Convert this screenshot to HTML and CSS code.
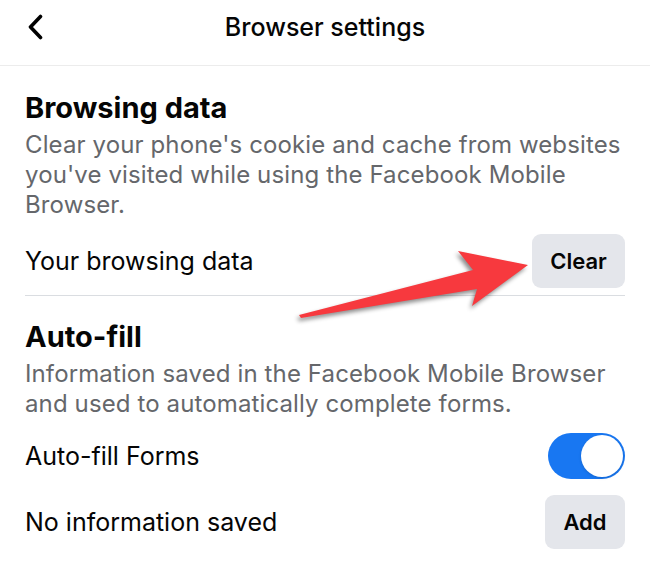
FILE: index.html
```html
<!DOCTYPE html>
<html lang="en">
<head>
<meta charset="utf-8">
<title>Browser settings</title>
<link rel="stylesheet" href="styles.css">
</head>
<body>
<div class="screen">
  <header class="topbar">
    <div class="back">
      <svg width="18" height="26" viewBox="0 0 18 26" aria-hidden="true">
        <polyline points="13.5,2.5 3.5,13 13.5,23.5" fill="none" stroke="#000" stroke-width="3.6" stroke-linecap="round" stroke-linejoin="round"/>
      </svg>
    </div>
    <h1 class="title">Browser settings</h1>
    <div class="spacer"></div>
  </header>

  <section class="section">
    <h2 class="heading">Browsing data</h2>
    <p class="desc">Clear your phone's cookie and cache from websites you've visited while using the Facebook Mobile Browser.</p>
    <div class="row">
      <span class="label">Your browsing data</span>
      <button class="btn btn-clear">Clear</button>
    </div>
  </section>

  <div class="divider"></div>

  <section class="section section-2">
    <h2 class="heading">Auto-fill</h2>
    <p class="desc">Information saved in the Facebook Mobile Browser and used to automatically complete forms.</p>
    <div class="row row-toggle">
      <span class="label">Auto-fill Forms</span>
      <span class="toggle"><span class="knob"></span></span>
    </div>
    <div class="row row-add">
      <span class="label">No information saved</span>
      <button class="btn btn-add">Add</button>
    </div>
  </section>

  <svg class="arrow" width="650" height="561" viewBox="0 0 650 561" aria-hidden="true">
    <polygon points="299,315 473,270 458,251 528,265 472,306 477,289 301,318" fill="#f7393e"/>
  </svg>
</div>
</body>
</html>
```

FILE: styles.css
```css
* { box-sizing: border-box; }
html, body {
  margin: 0;
  padding: 0;
  background: #fff;
}
body {
  font-family: "Inter", "Roboto", "Liberation Sans", sans-serif;
  color: #050505;
  width: 650px;
  height: 561px;
  overflow: hidden;
}
.screen {
  position: relative;
  width: 650px;
  height: 561px;
}
.topbar {
  display: grid;
  grid-template-columns: 1fr auto 1fr;
  align-items: center;
  height: 66px;
  padding-bottom: 11px;
  border-bottom: 1px solid #ececec;
}
.back {
  display: flex;
  padding-left: 27px;
}
.back svg { display: block; }
.title {
  margin: 0;
  font-size: 25px;
  font-weight: 500;
  line-height: 30px;
  color: #050505;
}
.section {
  padding: 25px 25px 0 25px;
}
.section-2 {
  padding-top: 24px;
}
.heading {
  margin: 0;
  font-size: 29px;
  line-height: 34px;
  font-weight: 700;
  color: #050505;
}
.desc {
  margin: 5px 0 0 0;
  font-size: 24px;
  line-height: 30px;
  color: #65676b;
  font-weight: 400;
  letter-spacing: 0.12px;
}
.row {
  display: flex;
  align-items: center;
  justify-content: space-between;
  height: 54px;
  margin-top: 14px;
}
.row-toggle { margin-top: 10px; }
.row-add { margin-top: 12px; }
.label {
  font-size: 25px;
  color: #050505;
}
.btn {
  border: none;
  background: #e4e6eb;
  border-radius: 9px;
  height: 54px;
  font-family: inherit;
  font-size: 22px;
  font-weight: 600;
  color: #050505;
  padding: 0;
}
.btn-clear { width: 93px; }
.btn-add { width: 80px; }
.divider {
  height: 1px;
  background: #dadde1;
  margin: 7px 25px 0 25px;
}
.toggle {
  display: flex;
  justify-content: flex-end;
  align-items: center;
  width: 77px;
  height: 46px;
  border-radius: 23px;
  background: #1877f2;
  padding: 2px;
}
.knob {
  width: 42px;
  height: 42px;
  border-radius: 50%;
  background: #fff;
  box-shadow: 0 1px 3px rgba(0,0,0,0.15);
}
.arrow {
  position: absolute;
  left: 0;
  top: 0;
  pointer-events: none;
  filter: drop-shadow(-2px 3px 2px rgba(0,0,0,0.45));
}
```
